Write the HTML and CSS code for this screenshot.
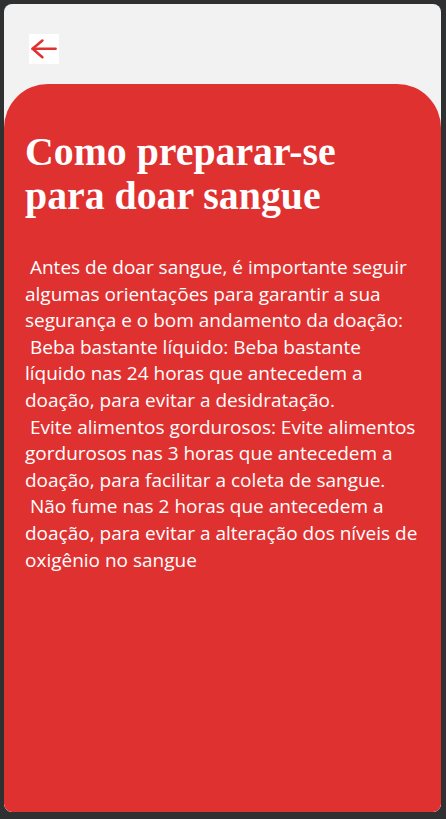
FILE: index.html
```html
<!DOCTYPE html>
<html lang="pt-BR">
<head>
<meta charset="utf-8">
<title>Como preparar-se para doar sangue</title>
<link rel="stylesheet" href="styles.css">
</head>
<body>
<div class="screen">
  <header class="header">
    <button class="back" aria-label="Voltar">
      <svg width="30" height="30" viewBox="0 0 30 30" fill="none" stroke="#e03131" stroke-width="2.6" stroke-linecap="round" stroke-linejoin="round">
        <path d="M3.6 14.8H26.6"/>
        <path d="M13.4 6.6L3.6 14.8L13.4 23.2"/>
      </svg>
    </button>
  </header>
  <main class="card">
    <h1 class="title">Como preparar-se para doar sangue</h1>
    <p class="text"> Antes de doar sangue, é importante seguir algumas orientações para garantir a sua segurança e o bom andamento da doação:
 Beba bastante líquido: Beba bastante<br>líquido nas 24 horas que antecedem a<br>doação, para evitar a desidratação.
 Evite alimentos gordurosos: Evite alimentos gordurosos nas 3 horas que antecedem a doação, para facilitar a coleta de sangue.
 Não fume nas 2 horas que antecedem a doação, para evitar a alteração dos níveis de oxigênio no sangue</p>
  </main>
</div>
</body>
</html>
```
FILE: styles.css
```css
html, body {
  margin: 0;
  padding: 0;
  height: 100%;
}
body {
  background: #2f3031;
  padding: 4px 5px 7px 4px;
  box-sizing: border-box;
  height: 819px;
  overflow: hidden;
}
.screen {
  height: 808px;
  background: #f2f2f2;
  border-radius: 8px;
  display: flex;
  flex-direction: column;
  overflow: hidden;
}
.header {
  padding: 30px 25px 20px;
  display: flex;
}
.back {
  width: 30px;
  height: 30px;
  padding: 0;
  border: 0;
  background: #ffffff;
  display: flex;
  align-items: center;
  justify-content: center;
}
.back svg {
  display: block;
}
.card {
  flex: 1;
  background: #e03131;
  border-radius: 44px 44px 8px 8px;
  padding: 47px 0 20px 21px;
  color: #ffffff;
}
.title {
  margin: 0 40px 0 0;
  font-family: "Liberation Serif", "Times New Roman", serif;
  font-weight: bold;
  font-size: 39.8px;
  line-height: 43.5px;
}
.text {
  margin: 36px -8px 0 0;
  font-family: "Open Sans", "Noto Sans", sans-serif;
  font-size: 19px;
  line-height: 26.6px;
  white-space: pre-wrap;
}
```
